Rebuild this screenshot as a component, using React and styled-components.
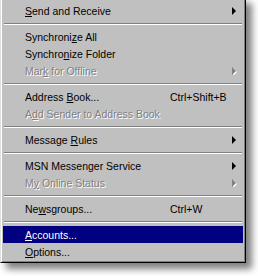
import React from 'react'
import styled, { createGlobalStyle } from 'styled-components'

const GlobalStyle = createGlobalStyle`
  html, body {
    margin: 0;
    padding: 0;
    background: #ffffff;
  }
  body {
    font-family: "Liberation Sans", Arial, sans-serif;
    font-size: 10.5px;
  }
`

const Viewport = styled.div`
  width: 258px;
  height: 276px;
  overflow: hidden;
`

const Menu = styled.ul`
  list-style: none;
  margin: -3px 0 0 0;
  width: 240px;
  padding: 4px 2px 2px 2px;
  background: #c0c0c0;
  border-style: solid;
  border-width: 1px;
  border-color: #dfdfdf #000000 #000000 #dfdfdf;
  box-shadow: inset 1px 1px 0 #ffffff, inset -1px -1px 0 #808080,
    6px 6px 7px rgba(0, 0, 0, 0.5);
  display: flex;
  flex-direction: column;
`

const Row = styled.li`
  height: 17px;
  display: flex;
  align-items: center;
  padding: 0 6px 0 22px;
  background: ${p => (p.$active ? '#000080' : 'transparent')};
  color: ${p => (p.$active ? '#ffffff' : p.$disabled ? '#808080' : '#000000')};
  text-shadow: ${p => (p.$disabled ? '1px 1px 0 #ffffff' : 'none')};
  white-space: nowrap;
`

const Label = styled.span`
  width: 145px;
  flex-shrink: 0;
`

const Shortcut = styled.span`
  flex: 1;
`

const Key = styled.u`
  text-decoration: underline;
  text-underline-offset: 1px;
`

const Separator = styled.li`
  height: 9px;
  display: flex;
  align-items: center;
  padding: 0 1px;
  &::before {
    content: '';
    flex: 1;
    height: 0;
    border-top: 1px solid #808080;
    border-bottom: 1px solid #ffffff;
  }
`

function Arrow({ disabled }) {
  return (
    <svg width="5" height="8" viewBox="0 0 5 8" style={{ display: 'block' }}>
      {disabled && <polygon points="1,1 5,5 1,9" fill="#ffffff" />}
      <polygon points="0,0 4,4 0,8" fill={disabled ? '#808080' : '#000000'} />
    </svg>
  )
}

const items = [
  { label: ['', 'S', 'end and Receive'], sub: true },
  { sep: true },
  { label: ['Synchroni', 'z', 'e All'] },
  { label: ['Synchro', 'n', 'ize Folder'] },
  { label: ['Mar', 'k', ' for Offline'], disabled: true, sub: true },
  { sep: true },
  { label: ['Address ', 'B', 'ook...'], shortcut: 'Ctrl+Shift+B' },
  { label: ['A', 'd', 'd Sender to Address Book'], disabled: true },
  { sep: true },
  { label: ['Message ', 'R', 'ules'], sub: true },
  { sep: true },
  { label: ['MSN Messenger Service', '', ''], sub: true },
  { label: ['M', 'y', ' Online Status'], disabled: true, sub: true },
  { sep: true },
  { label: ['Ne', 'w', 'sgroups...'], shortcut: 'Ctrl+W' },
  { sep: true },
  { label: ['', 'A', 'ccounts...'], active: true },
  { label: ['', 'O', 'ptions...'] },
]

export default function App() {
  return (
    <Viewport>
      <GlobalStyle />
      <Menu>
        {items.map((item, i) =>
          item.sep ? (
            <Separator key={i} />
          ) : (
            <Row key={i} $active={item.active} $disabled={item.disabled}>
              <Label>
                {item.label[0]}
                {item.label[1] && <Key>{item.label[1]}</Key>}
                {item.label[2]}
              </Label>
              <Shortcut>{item.shortcut}</Shortcut>
              {item.sub && <Arrow disabled={item.disabled} />}
            </Row>
          )
        )}
      </Menu>
    </Viewport>
  )
}
